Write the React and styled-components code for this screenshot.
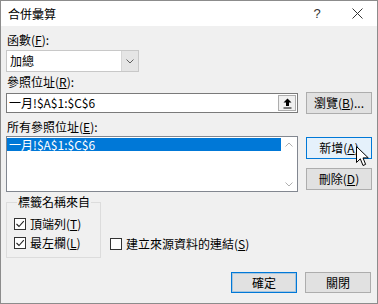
import React from 'react';
import styled, { createGlobalStyle, css } from 'styled-components';

const GlobalStyle = createGlobalStyle`
  html, body {
    margin: 0;
    padding: 0;
    background: #ffffff;
  }
  body {
    font-family: "Noto Sans CJK TC", "Noto Sans", sans-serif;
    font-size: 12px;
    color: #000;
  }
`;

const StyledWindow = styled.div`
  box-sizing: border-box;
  width: 378px;
  height: 304px;
  border: 1px solid #8c8c8c;
  background: #f0f0f0;
  display: flex;
  flex-direction: column;
  overflow: hidden;
`;

const TitleBar = styled.div`
  height: 25px;
  background: #ffffff;
  display: flex;
  align-items: center;
  padding-left: 7px;
  flex-shrink: 0;

  .title {
    flex: 1;
    line-height: 16px;
  }
`;

const TitleButton = styled.div`
  width: 40px;
  height: 25px;
  display: flex;
  align-items: center;
  justify-content: center;
  color: #333;
  font-family: "Liberation Sans", sans-serif;
  font-size: 13px;
`;

const Body = styled.div`
  flex: 1;
  display: flex;
  flex-direction: column;
  padding: 6px 5px 0 5px;
`;

const Label = styled.div`
  line-height: 16px;
  height: 16px;
  margin-top: ${({ $top }) => $top || 0}px;
  padding-left: 1px;
  white-space: nowrap;
`;

const Row = styled.div`
  display: flex;
  align-items: ${({ $align }) => $align || 'center'};
  gap: ${({ $gap }) => ($gap === undefined ? 8 : $gap)}px;
  margin-top: ${({ $top }) => $top || 0}px;
`;

const Combo = styled.div`
  box-sizing: border-box;
  width: 133px;
  height: 22px;
  margin-top: 2px;
  border: 1px solid #c8c8c8;
  background: #fff;
  display: flex;
  align-items: stretch;

  .value {
    flex: 1;
    padding-left: 3px;
    line-height: 20px;
  }

  .arrow {
    width: 16px;
    background: #e5e5e5;
    border-left: 1px solid #d6d6d6;
    display: flex;
    align-items: center;
    justify-content: center;
  }
`;

const RefInput = styled.div`
  box-sizing: border-box;
  width: 292px;
  height: 20px;
  border: 1px solid #7a7a7a;
  background: #fff;
  display: flex;
  align-items: stretch;

  .value {
    flex: 1;
    padding-left: 2px;
    line-height: 18px;
    font-family: "Noto Sans CJK TC", sans-serif;
  }

  .collapse {
    width: 16px;
    margin: 1px;
    background: #f0f0f0;
    border: 1px solid #adadad;
    display: flex;
    align-items: center;
    justify-content: center;
  }
`;

const Button = styled.div`
  box-sizing: border-box;
  width: 66px;
  height: ${({ $h }) => $h || 22}px;
  border: 1px solid #adadad;
  background: #e1e1e1;
  display: flex;
  align-items: center;
  justify-content: center;
  line-height: 16px;
  white-space: nowrap;

  ${({ $hover }) =>
    $hover &&
    css`
      background: #e5f1fb;
      border-color: #0078d7;
    `}

  ${({ $default }) =>
    $default &&
    css`
      border-color: #0078d7;
      box-shadow: inset 0 0 0 1px rgba(0, 120, 215, 0.25);
    `}
`;

const ButtonColumn = styled.div`
  display: flex;
  flex-direction: column;
  gap: 9px;
  padding-top: 1px;
  position: relative;
`;

const ListBox = styled.div`
  box-sizing: border-box;
  width: 292px;
  height: 56px;
  border: 1px solid #828790;
  background: #fff;
  display: flex;

  .items {
    flex: 1;
    padding: 1px 0 0 0;
  }

  .scroll {
    width: 16px;
    display: flex;
    flex-direction: column;
    justify-content: space-between;
    align-items: center;
    padding: 5px 0 4px;
  }
`;

const ListItem = styled.div`
  height: 13px;
  line-height: 13px;
  padding-left: 2px;
  background: ${({ $selected }) => ($selected ? '#0078d7' : 'transparent')};
  color: ${({ $selected }) => ($selected ? '#fff' : '#000')};
`;

const GroupBox = styled.fieldset`
  box-sizing: border-box;
  width: 95px;
  margin: 0;
  padding: 7px 0 6px 7px;
  border: 1px solid #dcdcdc;
  display: flex;
  flex-direction: column;
  gap: 3px;

  legend {
    padding: 0 1px;
    margin-left: 3px;
    line-height: 14px;
  }
`;

const CheckRow = styled.label`
  display: flex;
  align-items: center;
  gap: 4px;
  line-height: 16px;
  white-space: nowrap;
  margin-bottom: ${({ $bottom }) => $bottom || 0}px;
`;

const CheckBox = styled.span`
  box-sizing: border-box;
  width: 12px;
  height: 12px;
  border: 1px solid #333;
  background: #fff;
  display: flex;
  align-items: center;
  justify-content: center;
`;

const Footer = styled.div`
  display: flex;
  justify-content: flex-end;
  gap: 8px;
  margin-top: 14px;
  padding-right: 1px;
`;

const Cursor = styled.svg`
  position: absolute;
  left: 50px;
  top: 10px;
`;

const Check = () => (
  <svg width="10" height="10" viewBox="0 0 10 10">
    <path d="M1.5 5 L4 7.5 L8.8 2.2" fill="none" stroke="#222" strokeWidth="1.1" />
  </svg>
);

const CheckItem = ({ checked, children, bottom }) => (
  <CheckRow $bottom={bottom}>
    <CheckBox>{checked && <Check />}</CheckBox>
    <span>{children}</span>
  </CheckRow>
);

const Chevron = ({ up }) => (
  <svg width="8" height="5" viewBox="0 0 8 5">
    <path
      d={up ? 'M0.5 4.5 L4 1 L7.5 4.5' : 'M0.5 0.5 L4 4 L7.5 0.5'}
      fill="none"
      stroke="#b0b0b0"
      strokeWidth="1"
    />
  </svg>
);

const App = () => (
  <>
    <GlobalStyle />
    <StyledWindow>
      <TitleBar>
        <span className="title">合併彙算</span>
        <TitleButton>?</TitleButton>
        <TitleButton>
          <svg width="11" height="11" viewBox="0 0 11 11">
            <path d="M0.5 0.5 L10.5 10.5 M10.5 0.5 L0.5 10.5" stroke="#333" strokeWidth="1" />
          </svg>
        </TitleButton>
      </TitleBar>

      <Body>
        <Label>
          函數(<u>F</u>):
        </Label>
        <Combo>
          <span className="value">加總</span>
          <span className="arrow">
            <svg width="8" height="5" viewBox="0 0 8 5">
              <path d="M0.5 0.5 L4 4 L7.5 0.5" fill="none" stroke="#606060" strokeWidth="1" />
            </svg>
          </span>
        </Combo>

        <Label $top={2}>
          參照位址(<u>R</u>):
        </Label>
        <Row $top={2}>
          <RefInput>
            <span className="value">一月!$A$1:$C$6</span>
            <span className="collapse">
              <svg width="9" height="11" viewBox="0 0 9 11">
                <path d="M4.5 0.5 L8.5 4.5 L6 4.5 L6 8 L3 8 L3 4.5 L0.5 4.5 Z" fill="#000" />
                <rect x="0.5" y="9.5" width="8" height="1" fill="#000" />
              </svg>
            </span>
          </RefInput>
          <Button>
            瀏覽(<u>B</u>)...
          </Button>
        </Row>

        <Label $top={5}>
          所有參照位址(<u>E</u>):
        </Label>
        <Row $top={1} $align="flex-start">
          <ListBox>
            <div className="items">
              <ListItem $selected>一月!$A$1:$C$6</ListItem>
            </div>
            <div className="scroll">
              <Chevron up />
              <Chevron />
            </div>
          </ListBox>
          <ButtonColumn>
            <Button $hover>
              新增(<u>A</u>)
            </Button>
            <Button>
              刪除(<u>D</u>)
            </Button>
            <Cursor width="15" height="22" viewBox="0 0 15 22">
              <path
                d="M0.5 0.5 L0.5 16.5 L4.3 12.8 L7 19.5 L9.6 18.4 L7 11.9 L12.3 11.9 Z"
                fill="#fff"
                stroke="#000"
                strokeWidth="1"
                strokeLinejoin="round"
              />
            </Cursor>
          </ButtonColumn>
        </Row>

        <Row $top={3} $align="flex-end" $gap={9}>
          <GroupBox>
            <legend>標籤名稱來自</legend>
            <CheckItem checked>
              頂端列(<u>T</u>)
            </CheckItem>
            <CheckItem checked>
              最左欄(<u>L</u>)
            </CheckItem>
          </GroupBox>
          <CheckItem bottom={6}>
            建立來源資料的連結(<u>S</u>)
          </CheckItem>
        </Row>

        <Footer>
          <Button $default $h={21}>
            確定
          </Button>
          <Button $h={21}>關閉</Button>
        </Footer>
      </Body>
    </StyledWindow>
  </>
);

export default App;
